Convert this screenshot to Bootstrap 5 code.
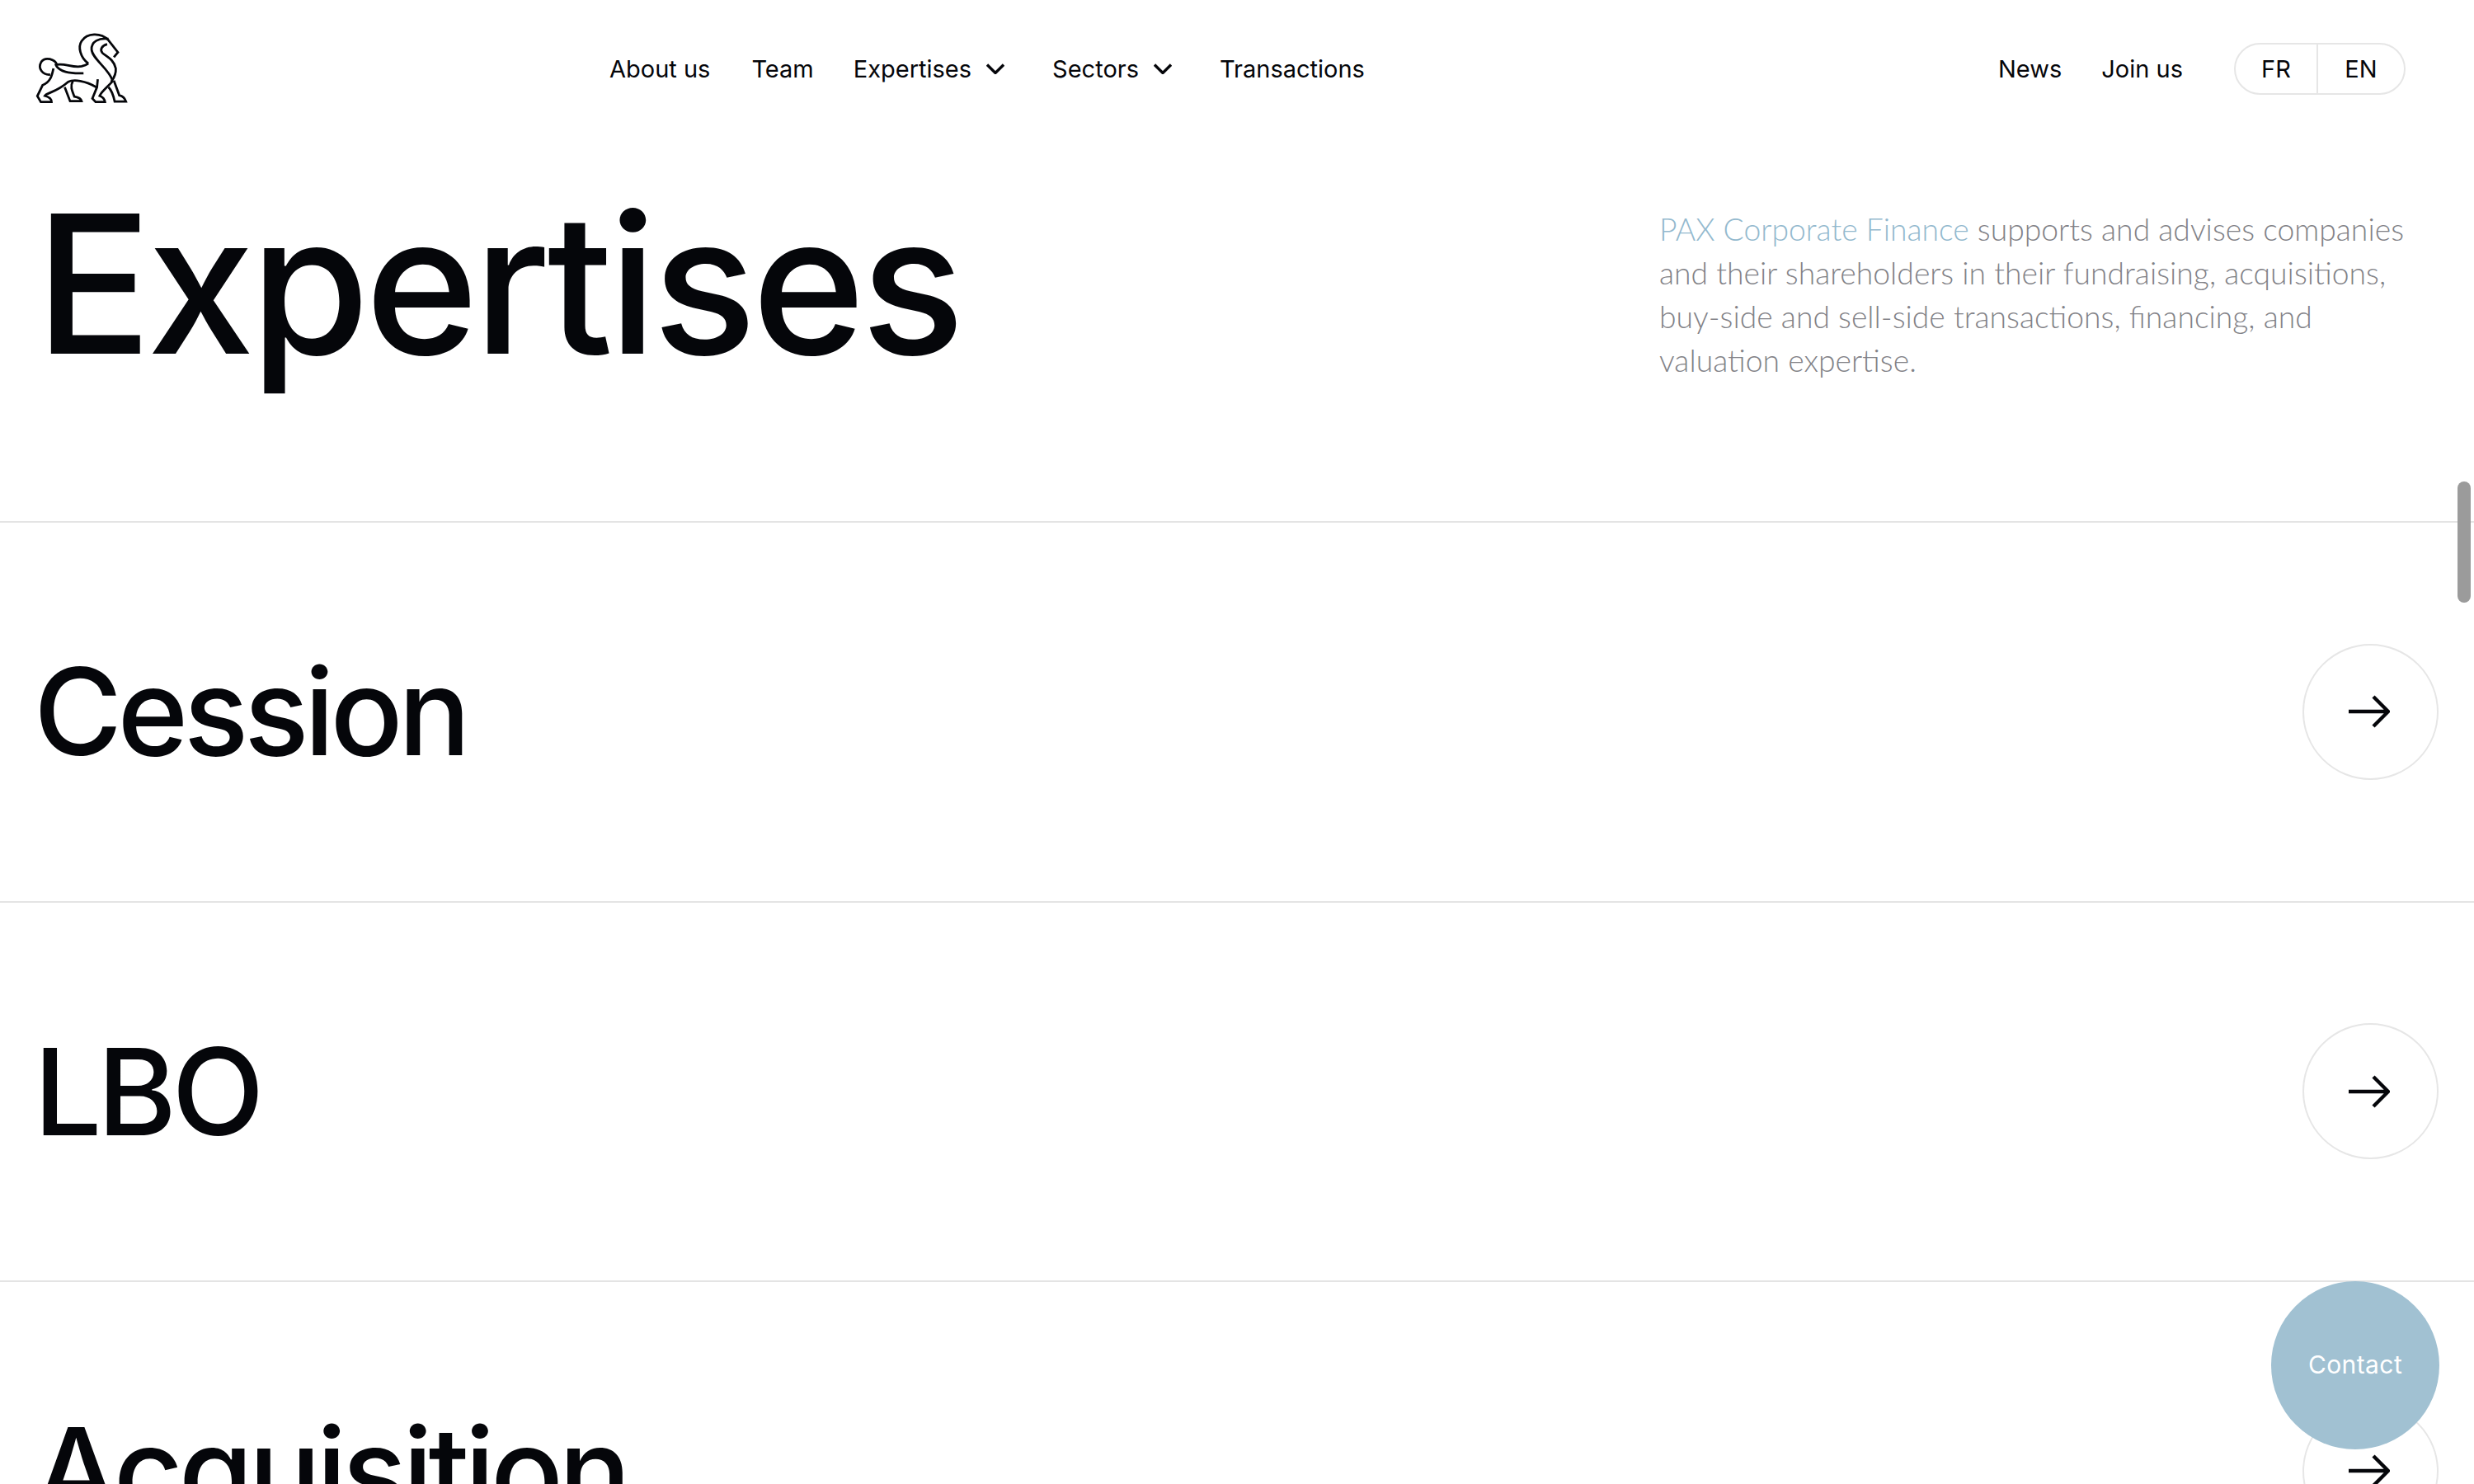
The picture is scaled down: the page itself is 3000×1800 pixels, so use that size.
<!DOCTYPE html>
<html lang="en">
<head>
    <meta charset="UTF-8">
    <meta name="viewport" content="width=device-width, initial-scale=1.0">
    <title>Expertises</title>
    <link href="https://cdn.jsdelivr.net/npm/bootstrap@5.3.0/dist/css/bootstrap.min.css" rel="stylesheet">
    <style>
        html, body { height: 100%; overflow: hidden; }
        body { font-family: Inter, "Liberation Sans", sans-serif; color: #05060a; background: #fff; }
        .top-bar { height: 166px; padding: 0 83px 0 42px; position: relative; }
        .lion-logo { width: 114px; height: 88px; display: block; margin-top: -1px; }
        .main-links { position: absolute; left: 739px; top: 0; height: 166px; gap: 48px; }
        .main-links > a:first-child { margin-right: 2px; }
        .side-links { gap: 48px; margin-left: auto; }
        .top-link { font-size: 29px; color: #05060a; text-decoration: none; line-height: 1; white-space: nowrap; }
        .chev { width: 22px; height: 13px; margin-left: 18px; margin-right: 10px; }
        .lang-pill { width: 208px; height: 63px; border: 2px solid #e6e6e6; border-radius: 32px; margin-left: 14px; }
        .lang-pill a { height: 100%; }
        .lang-pill a:first-child { width: 98px; flex: none; }
        .lang-pill a + a { flex: 1 1 auto; border-left: 2px solid #e6e6e6; }
        .hero-block { height: 468px; padding: 0 43px 0 43px; border-bottom: 2px solid #e4e4e4; }
        .hero-title { font-size: 234px; font-weight: 500; letter-spacing: -5.5px; line-height: 1; margin: 0; margin-top: 61px; }
        .hero-text { width: 930px; margin-top: 85px; margin-right: 15px; font-family: Lato, sans-serif; font-weight: 300; font-size: 37.3px; line-height: 53px; color: #828287; }
        .hero-text span { color: #93b9ce; }
        .exp-row { height: 460.5px; padding: 0 43px 0 41px; border-bottom: 2px solid #e4e4e4; }
        .exp-name { font-size: 146px; font-weight: 460; letter-spacing: -5.5px; line-height: 1; margin: 0; }
        .round-arrow { width: 165px; height: 165px; border: 2px solid #e6e6e6; border-radius: 50%; flex: none; }
        .round-arrow svg { width: 50px; height: 40px; margin-right: 3px; }
        .contact-bubble { position: fixed; left: 2754px; top: 1554px; width: 204px; height: 204px; padding-bottom: 2px; border-radius: 50%; background: #a1c1d2; color: #fff; font-size: 30px; letter-spacing: .4px; text-decoration: none; }
        .scroll-thumb { position: fixed; left: 2980px; top: 584px; width: 16px; height: 147px; border-radius: 8px; background: #9b9b9b; }
    </style>
</head>
<body>
    <nav class="top-bar d-flex align-items-center">
        <a href="#">
            <svg class="lion-logo" viewBox="120 115 350 270" fill="none" stroke="#05060a" stroke-width="8.5">
                <path d="M320 232C290 210 280 170 295 148C315 118 365 115 395 145L430 190L415 208"/>
                <path d="M395 140C360 135 330 150 332 180C335 215 395 250 410 295"/>
                <path d="M390 160C370 165 362 180 372 192C385 205 415 215 422 250C424 275 412 290 405 300"/>
                <path d="M204 237C195 215 160 205 145 225C130 250 150 275 178 273"/>
                <path d="M195 238C225 225 260 250 295 242C310 238 320 232 320 232"/>
                <path d="M200 240C215 262 245 270 302 268"/>
                <path d="M190 250C185 275 180 300 150 312L130 353L143 375H183C183 360 170 355 158 352C165 340 200 340 245 300C265 290 310 295 350 320"/>
                <path d="M232 320L252 372H295C292 360 280 357 268 355C258 330 252 315 262 298"/>
                <path d="M355 290L352 320L335 362L347 375H382C380 362 370 355 362 352C370 335 385 325 410 298"/>
                <path d="M395 320C405 330 412 345 418 373H460C455 358 445 352 435 350L415 295"/>
            </svg>
        </a>
        <div class="main-links d-flex align-items-center">
            <a class="top-link" href="#">About us</a>
            <a class="top-link" href="#">Team</a>
            <a class="top-link d-flex align-items-center" href="#">Expertises
                <svg class="chev" viewBox="0 0 22 13" fill="none" stroke="#05060a" stroke-width="3.4"><path d="M1 1.5l10 10 10-10"/></svg></a>
            <a class="top-link d-flex align-items-center" href="#">Sectors
                <svg class="chev" viewBox="0 0 22 13" fill="none" stroke="#05060a" stroke-width="3.4"><path d="M1 1.5l10 10 10-10"/></svg></a>
            <a class="top-link" href="#">Transactions</a>
        </div>
        <div class="side-links d-flex align-items-center">
            <a class="top-link" href="#">News</a>
            <a class="top-link" href="#">Join us</a>
            <div class="lang-pill d-flex">
                <a class="top-link d-flex align-items-center justify-content-center" href="#">FR</a>
                <a class="top-link d-flex align-items-center justify-content-center" href="#">EN</a>
            </div>
        </div>
    </nav>

    <header class="hero-block d-flex justify-content-between">
        <h1 class="hero-title">Expertises</h1>
        <p class="hero-text"><span>PAX Corporate Finance</span> supports and advises companies and their shareholders in their fundraising, acquisitions, buy-side and sell-side transactions, financing, and valuation expertise.</p>
    </header>

    <main>
        <div class="exp-row d-flex align-items-center justify-content-between">
            <h2 class="exp-name">Cession</h2>
            <a class="round-arrow d-flex align-items-center justify-content-center" href="#">
                <svg viewBox="0 0 50 40" fill="none" stroke="#05060a" stroke-width="4.4"><path d="M0 20h47M30 2l18 18-18 18"/></svg>
            </a>
        </div>
        <div class="exp-row d-flex align-items-center justify-content-between">
            <h2 class="exp-name">LBO</h2>
            <a class="round-arrow d-flex align-items-center justify-content-center" href="#">
                <svg viewBox="0 0 50 40" fill="none" stroke="#05060a" stroke-width="4.4"><path d="M0 20h47M30 2l18 18-18 18"/></svg>
            </a>
        </div>
        <div class="exp-row d-flex align-items-center justify-content-between">
            <h2 class="exp-name">Acquisition</h2>
            <a class="round-arrow d-flex align-items-center justify-content-center" href="#">
                <svg viewBox="0 0 50 40" fill="none" stroke="#05060a" stroke-width="4.4"><path d="M0 20h47M30 2l18 18-18 18"/></svg>
            </a>
        </div>
    </main>

    <a class="contact-bubble d-flex align-items-center justify-content-center" href="#">Contact</a>
    <div class="scroll-thumb"></div>

    <script src="https://cdn.jsdelivr.net/npm/bootstrap@5.3.0/dist/js/bootstrap.bundle.min.js"></script>
</body>
</html>
